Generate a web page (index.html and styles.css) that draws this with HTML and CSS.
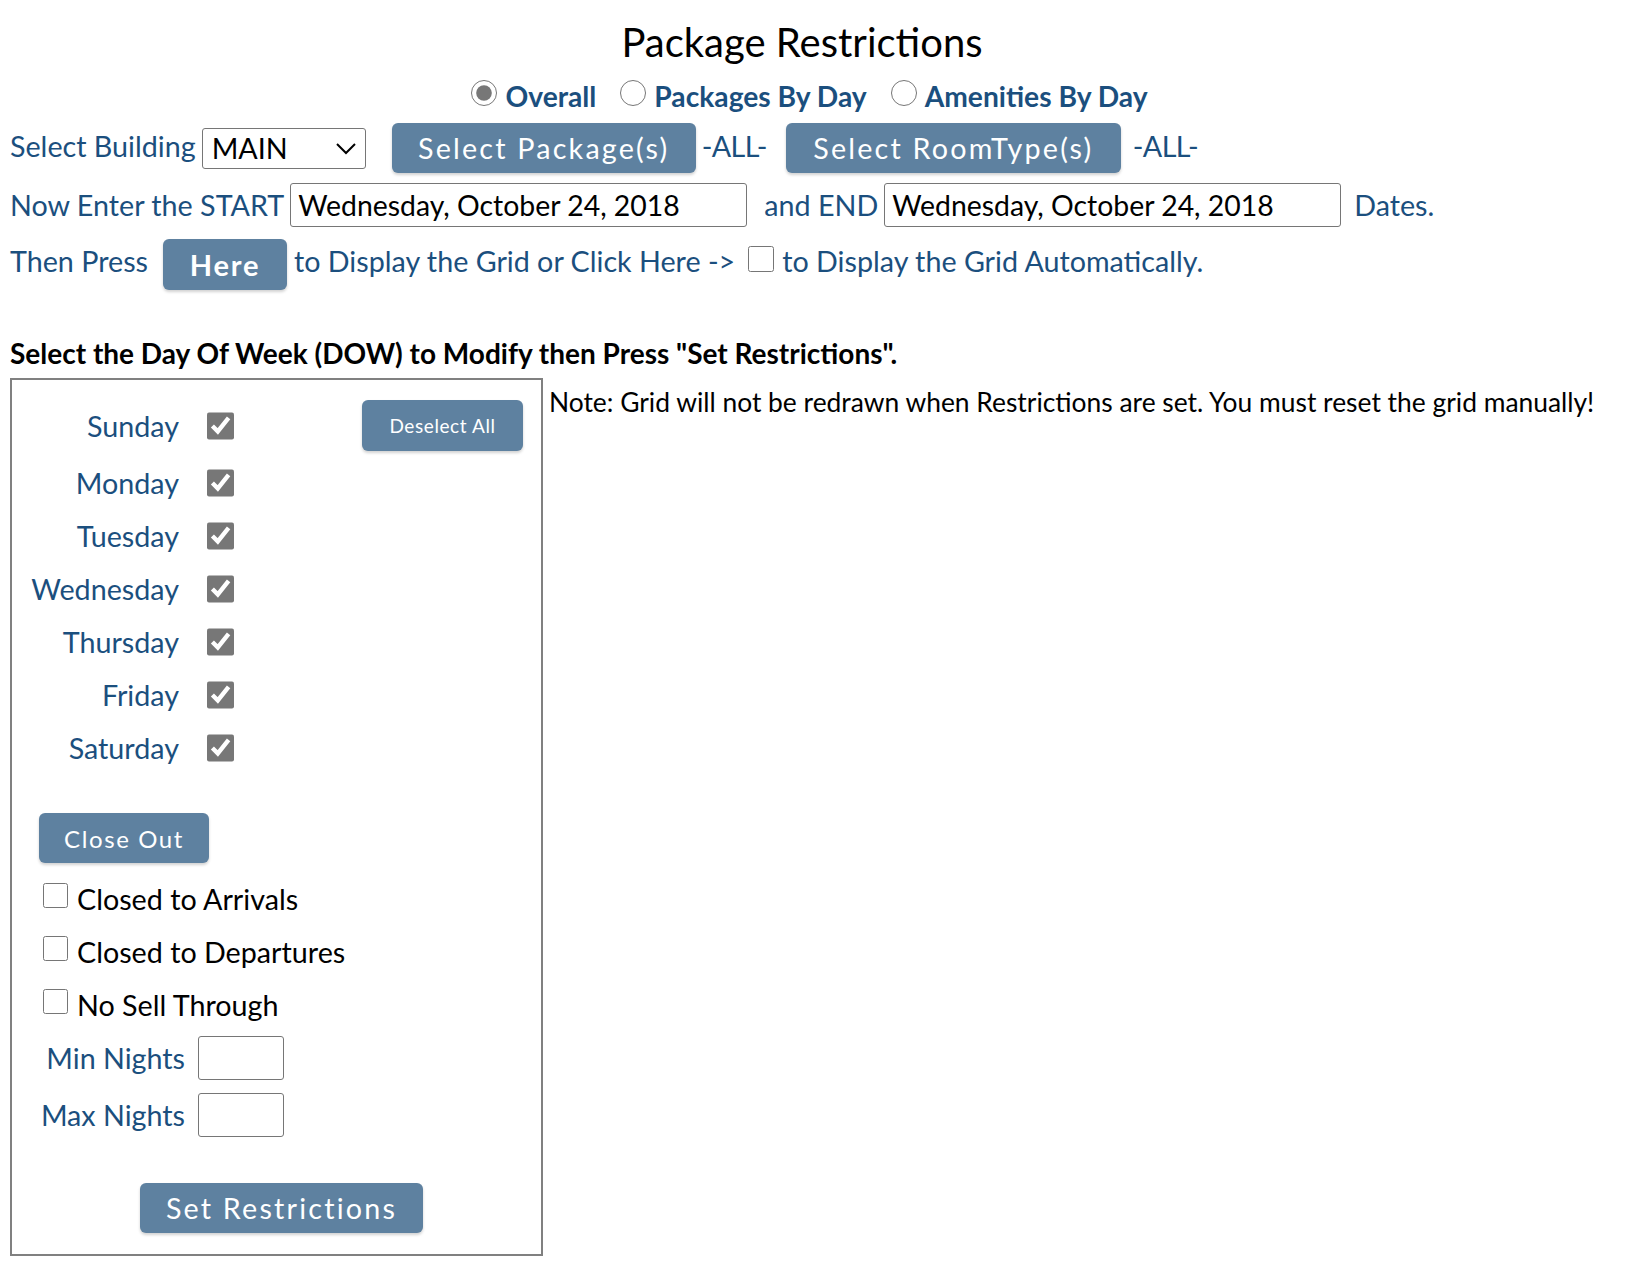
FILE: index.html
```html
<!DOCTYPE html>
<html>
<head>
<meta charset="utf-8">
<title>Package Restrictions</title>
<link rel="stylesheet" href="styles.css">
</head>
<body>
<div class="page">
  <h1 class="title">Package Restrictions</h1>
  <div class="modes">
    <label class="mode"><input type="radio" name="mode" checked> Overall</label>
    <label class="mode"><input type="radio" name="mode"> Packages By Day</label>
    <label class="mode"><input type="radio" name="mode"> Amenities By Day</label>
  </div>

  <div class="row row-1">
    <span class="lbl">Select Building</span>
    <span class="select-wrap">
      <select class="building"><option>MAIN</option></select>
      <svg class="chev" width="20" height="12" viewBox="0 0 20 12"><path d="M1 1 L10 10 L19 1" fill="none" stroke="#000" stroke-width="2"/></svg>
    </span>
    <button class="btn btn-lg btn-pkg">Select Package(s)</button>
    <span class="lbl all-1">-ALL-</span>
    <button class="btn btn-lg btn-room">Select RoomType(s)</button>
    <span class="lbl all-2">-ALL-</span>
  </div>

  <div class="row row-2">
    <span class="lbl">Now Enter the START</span>
    <input class="date" type="text" value="Wednesday, October 24, 2018">
    <span class="lbl and-end">and END</span>
    <input class="date date-end" type="text" value="Wednesday, October 24, 2018">
    <span class="lbl dates">Dates.</span>
  </div>

  <div class="row row-3">
    <span class="lbl">Then Press</span>
    <button class="btn btn-here">Here</button>
    <span class="lbl disp">to Display the Grid or Click Here -&gt;</span>
    <input class="cb auto-cb" type="checkbox">
    <span class="lbl">to Display the Grid Automatically.</span>
  </div>

  <h2 class="section">Select the Day Of Week (DOW) to Modify then Press "Set Restrictions".</h2>

  <div class="dow-layout">
    <div class="dow-box">
      <div class="days">
        <span class="day">Sunday</span><input class="cb day-cb" type="checkbox" checked>
        <button class="btn btn-sm deselect">Deselect All</button>
        <span class="day">Monday</span><input class="cb day-cb" type="checkbox" checked><span></span>
        <span class="day">Tuesday</span><input class="cb day-cb" type="checkbox" checked><span></span>
        <span class="day">Wednesday</span><input class="cb day-cb" type="checkbox" checked><span></span>
        <span class="day">Thursday</span><input class="cb day-cb" type="checkbox" checked><span></span>
        <span class="day">Friday</span><input class="cb day-cb" type="checkbox" checked><span></span>
        <span class="day">Saturday</span><input class="cb day-cb" type="checkbox" checked><span></span>
      </div>

      <button class="btn btn-md closeout">Close Out</button>

      <div class="opts">
        <label class="opt"><input class="cb" type="checkbox"> Closed to Arrivals</label>
        <label class="opt"><input class="cb" type="checkbox"> Closed to Departures</label>
        <label class="opt"><input class="cb" type="checkbox"> No Sell Through</label>
      </div>

      <div class="nights">
        <span class="day">Min Nights</span><input class="num" type="text">
        <span class="day">Max Nights</span><input class="num" type="text">
      </div>

      <div class="set-wrap">
        <button class="btn btn-md set">Set Restrictions</button>
      </div>
    </div>
    <p class="note">Note: Grid will not be redrawn when Restrictions are set. You must reset the grid manually!</p>
  </div>
</div>
</body>
</html>
```

FILE: styles.css
```css
* { box-sizing: border-box; }
html, body { margin: 0; padding: 0; background: #fff; }
body {
  font-family: Lato, "Open Sans", "Liberation Sans", sans-serif;
  font-size: 28.7px;
  color: #000;
}
.page { padding: 0 0 0 10px; width: 1639px; }

.title {
  margin: 0;
  padding: 17px 45px 0 0;
  font-size: 40px;
  font-weight: 400;
  line-height: 50px;
  text-align: center;
  color: #000;
}

.modes {
  display: flex;
  justify-content: center;
  gap: 24px;
  padding-right: 30px;
  height: 38px;
  align-items: center;
  margin-top: 10px;
}
.mode {
  display: flex;
  align-items: center;
  font-weight: 700;
  color: #1b4f7e;
  font-size: 28.2px;
  gap: 8px;
}
.mode input {
  width: 26px;
  height: 26px;
  margin: 0;
  accent-color: #777;
  position: relative;
  top: -3px;
}

.row { display: flex; align-items: center; }
.lbl { color: #1b4f7e; white-space: nowrap; }

.row-1 { height: 50px; margin-top: 8px; }
.row-1 .lbl { margin-bottom: 4px; }
.select-wrap { position: relative; margin-left: 6px; display: inline-flex; }
.building {
  -webkit-appearance: none;
  appearance: none;
  width: 164px;
  height: 41px;
  font-family: Lato, sans-serif;
  font-size: 28.7px;
  color: #000;
  border: 1px solid #767676;
  border-radius: 3px;
  background: #fff;
  padding: 0 0 0 9px;
}
.chev { position: absolute; right: 10px; top: 15px; pointer-events: none; }
.btn {
  font-family: Lato, sans-serif;
  background: #5e81a0;
  color: #fff;
  border: none;
  border-radius: 6px;
  box-shadow: 0 2px 3px rgba(0,0,0,0.18);
  cursor: pointer;
  white-space: nowrap;
}
.btn-lg {
  height: 50px;
  font-size: 28.7px;
  letter-spacing: 2.2px;
  padding: 0;
}
.btn-pkg { margin-left: 26px; width: 304px; }
.all-1 { margin-left: 6px; letter-spacing: -0.6px; }
.btn-room { margin-left: 19px; width: 335px; }
.all-2 { margin-left: 12px; letter-spacing: -0.6px; }

.row-2 { height: 44px; margin-top: 10px; }
.date {
  width: 457px;
  height: 44px;
  margin-left: 6px;
  font-family: Lato, sans-serif;
  font-size: 28.4px;
  color: #000;
  border: 1px solid #767676;
  border-radius: 3px;
  padding: 0 7px;
}
.and-end { margin-left: 17px; }
.date-end { margin-left: 6px; }
.dates { margin-left: 13px; }

.row-3 { height: 51px; margin-top: 12px; }
.row-3 .lbl { margin-bottom: 8px; }
.btn-here {
  height: 51px;
  width: 124px;
  margin-left: 15px;
  font-size: 29px;
  font-weight: 700;
  letter-spacing: 1.8px;
  padding: 0;
}
.disp { margin-left: 7px; }
.cb {
  width: 26px;
  height: 26px;
  margin: 0;
  accent-color: #777;
}
.auto-cb { margin: 0 8px 0 13px; position: relative; top: -6px; }

.section {
  margin: 43px 0 0 0;
  font-size: 28px;
  font-weight: 700;
  line-height: 40px;
  letter-spacing: 0;
  color: #000;
}

.dow-layout { display: flex; align-items: flex-start; margin-top: 5px; }
.dow-box {
  width: 533px;
  border: 2px solid #808080;
  padding: 20px 0 21px 0;
  flex: none;
}
.days {
  display: grid;
  grid-template-columns: 167px 27px 1fr;
  column-gap: 28px;
  row-gap: 11px;
  grid-auto-rows: 42px;
  grid-template-rows: 51px;
  align-items: center;
}
.day {
  color: #1b4f7e;
  text-align: right;
  white-space: nowrap;
}
.day-cb { width: 27px; height: 28px; }
.btn-sm {
  justify-self: end;
  margin-right: 18px;
  width: 161px;
  height: 51px;
  font-size: 19px;
  letter-spacing: 0.6px;
  padding: 0;
}
.btn-md {
  height: 50px;
  padding: 0;
}
.closeout { margin: 44px 0 0 27px; width: 170px; display: block; font-size: 24px; letter-spacing: 1.6px; }

.opts { margin-top: 18px; display: flex; flex-direction: column; gap: 18px; padding-left: 31px; }
.opt { display: flex; align-items: center; gap: 9px; height: 35px; color: #000; }
.opt .cb { width: 25px; height: 25px; position: relative; top: -3px; }

.nights {
  margin-top: 14px;
  display: grid;
  grid-template-columns: 173px 86px;
  column-gap: 13px;
  row-gap: 13px;
  grid-auto-rows: 44px;
  align-items: center;
}
.num {
  width: 86px;
  height: 44px;
  border: 1px solid #767676;
  border-radius: 3px;
  font-family: Lato, sans-serif;
  font-size: 24px;
}

.set-wrap { margin-top: 46px; display: flex; justify-content: center; padding-left: 10px; }
.set { width: 283px; font-size: 28.7px; letter-spacing: 2.2px; }

.note {
  margin: 8px 0 0 6px;
  font-size: 26.4px;
  line-height: 32px;
  color: #000;
  white-space: nowrap;
}
```
